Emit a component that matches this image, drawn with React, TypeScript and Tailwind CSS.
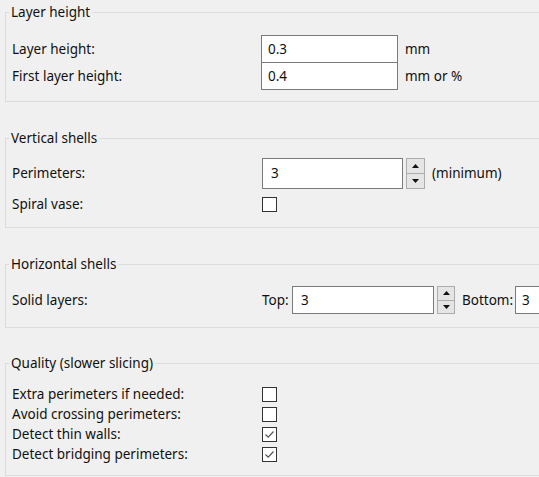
import React from "react";

const font = { fontFamily: '"Segoe UI", "Noto Sans", "Open Sans", sans-serif' };

function Check({ checked }: { checked?: boolean }) {
  return (
    <div className="w-[15px] h-[15px] border border-[#333333] bg-white flex items-center justify-center">
      {checked && (
        <svg width="13" height="13" viewBox="0 0 13 13">
          <polyline points="2.5,6.5 5.2,9.2 10.5,3.5" fill="none" stroke="#555" strokeWidth="1.2" />
        </svg>
      )}
    </div>
  );
}

function Spinner() {
  return (
    <div className="flex flex-col w-[19px] h-[31px] ml-[3px]">
      <div className="flex-1 bg-[#e5e5e5] border border-[#acacac] flex items-center justify-center">
        <svg width="7" height="4" viewBox="0 0 7 4"><polygon points="0,4 7,4 3.5,0" fill="#111" /></svg>
      </div>
      <div className="flex-1 bg-[#e5e5e5] border border-[#acacac] border-t-0 flex items-center justify-center">
        <svg width="7" height="4" viewBox="0 0 7 4"><polygon points="0,0 7,0 3.5,4" fill="#111" /></svg>
      </div>
    </div>
  );
}

function Group({ title, className, children }: { title: string; className: string; children: React.ReactNode }) {
  return (
    <fieldset className={"border border-[#dcdcdc] pl-[6px] pr-[6px] " + className}>
      <legend className="px-[2px] -ml-[3px] leading-[18px] text-[#111]">{title}</legend>
      {children}
    </fieldset>
  );
}

export default function App() {
  return (
    <div className="w-[539px] h-[477px] overflow-hidden bg-[#f0f0f0] text-[13.5px] text-[#111]" style={font}>
      <div className="w-[640px] pl-[5px] pt-[3px] flex flex-col">
        <Group title="Layer height" className="pt-[14px] pb-[11px]">
          <div className="flex items-center h-[28px]">
            <div className="w-[249px]">Layer height:</div>
            <div className="w-[137px] h-[28px] border border-[#7a7a7a] bg-white flex items-center pl-[6px]">0.3</div>
            <div className="ml-[7px]">mm</div>
          </div>
          <div className="flex items-center h-[28px] -mt-px">
            <div className="w-[249px]">First layer height:</div>
            <div className="w-[137px] h-[28px] border border-[#7a7a7a] bg-white flex items-center pl-[6px]">0.4</div>
            <div className="ml-[7px]">mm or %</div>
          </div>
        </Group>

        <Group title="Vertical shells" className="mt-[27px] pt-[11px] pb-[13px]">
          <div className="flex items-center h-[31px]">
            <div className="w-[250px]">Perimeters:</div>
            <div className="w-[141px] h-[31px] border border-[#7a7a7a] bg-white flex items-center pl-[8px]">3</div>
            <Spinner />
            <div className="ml-[7px]">(minimum)</div>
          </div>
          <div className="flex items-center h-[20px] mt-[5px]">
            <div className="w-[250px]">Spiral vase:</div>
            <Check />
          </div>
        </Group>

        <Group title="Horizontal shells" className="mt-[27px] pt-[13px] pb-[13px]">
          <div className="flex items-center h-[28px]">
            <div className="w-[250px]">Solid layers:</div>
            <div className="w-[30px]">Top:</div>
            <div className="w-[142px] h-[28px] border border-[#7a7a7a] bg-white flex items-center pl-[8px]">3</div>
            <div className="h-[28px] flex items-center">
              <div className="flex flex-col w-[18px] h-[28px] ml-[3px]">
                <div className="flex-1 bg-[#e5e5e5] border border-[#acacac] flex items-center justify-center">
                  <svg width="7" height="4" viewBox="0 0 7 4"><polygon points="0,4 7,4 3.5,0" fill="#111" /></svg>
                </div>
                <div className="flex-1 bg-[#e5e5e5] border border-[#acacac] border-t-0 flex items-center justify-center">
                  <svg width="7" height="4" viewBox="0 0 7 4"><polygon points="0,0 7,0 3.5,4" fill="#111" /></svg>
                </div>
              </div>
            </div>
            <div className="ml-[7px] w-[53px]">Bottom:</div>
            <div className="w-[100px] h-[28px] border border-[#7a7a7a] bg-white flex items-center pl-[6px]">3</div>
          </div>
        </Group>

        <Group title="Quality (slower slicing)" className="mt-[26px] pt-[12px] pb-[11px]">
          {[
            ["Extra perimeters if needed:", false],
            ["Avoid crossing perimeters:", false],
            ["Detect thin walls:", true],
            ["Detect bridging perimeters:", true],
          ].map(([label, checked]) => (
            <div key={label as string} className="flex items-center h-[20px]">
              <div className="w-[250px]">{label as string}</div>
              <Check checked={checked as boolean} />
            </div>
          ))}
        </Group>
      </div>
    </div>
  );
}
